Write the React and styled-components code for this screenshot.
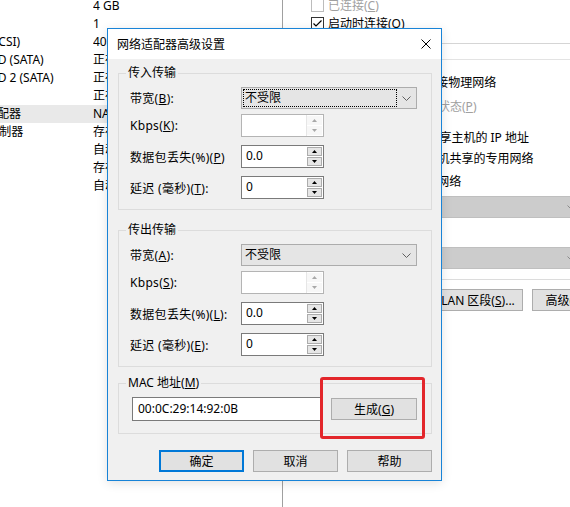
import React from 'react';
import styled, { createGlobalStyle } from 'styled-components';

const GlobalStyle = createGlobalStyle`
  html, body {
    margin: 0;
    padding: 0;
    background: #fff;
  }
  body {
    width: 570px;
    height: 507px;
    overflow: hidden;
    font-family: "Noto Sans", "Noto Sans CJK SC", sans-serif;
    font-size: 12px;
    color: #000;
  }
`;

const Screen = styled.div`
  position: relative;
  display: flex;
  width: 570px;
  height: 507px;
  overflow: hidden;
  background: #fff;
`;

/* ---------- background: VMware device list ---------- */

const DevicePane = styled.div`
  flex: none;
  width: 282px;
  border-right: 1px solid #a0a0a0;
  overflow: hidden;
`;

const DeviceList = styled.div`
  margin: -3px 0 0 -39px;
`;

const DeviceRow = styled.div`
  display: grid;
  grid-template-columns: 132px 1fr;
  height: 18px;
  line-height: 18px;
  white-space: nowrap;
  background: ${({ $selected }) => ($selected ? '#e9e9e9' : 'transparent')};
`;

const Cell = styled.span`
  overflow: hidden;
`;

/* ---------- background: settings on the right ---------- */

const SettingsPane = styled.div`
  flex: none;
  width: 310px;
  margin-top: -4px;
  display: flex;
  flex-direction: column;
`;

const StatusBlock = styled.div`
  padding: 0 0 11px 28px;
  border-bottom: 1px solid #d5d5d5;
`;

const NetworkBlock = styled.div`
  margin-top: 15px;
  padding: 13px 0 10px 30px;
  border-top: 1px solid #e3e3e3;
  border-bottom: 1px solid #dcdcdc;
  display: flex;
  flex-direction: column;
`;

const OptionRow = styled.div`
  display: flex;
  align-items: center;
  gap: ${({ $gap }) => $gap ?? 4}px;
  height: 18px;
  margin-top: ${({ $top }) => $top || 0}px;
  padding-left: ${({ $indent }) => $indent || 0}px;
  white-space: nowrap;
  color: ${({ $disabled }) => ($disabled ? '#a0a0a0' : '#000')};
`;

const OptionText = styled.span`
  white-space: nowrap;
`;

const CheckBox = styled.span`
  flex: none;
  box-sizing: border-box;
  width: 13px;
  height: 13px;
  border: 1px solid ${({ $disabled }) => ($disabled ? '#bcbcbc' : '#333')};
  background: #fff;
  display: flex;
  align-items: center;
  justify-content: center;
`;

const Radio = styled.span`
  flex: none;
  box-sizing: border-box;
  width: 12px;
  height: 12px;
  border-radius: 50%;
  border: 1px solid #333;
  background: #fff;
  display: flex;
  align-items: center;
  justify-content: center;
  &::after {
    content: '';
    width: 6px;
    height: 6px;
    border-radius: 50%;
    background: ${({ $on }) => ($on ? '#333' : 'transparent')};
  }
`;

const DisabledCombo = styled.div`
  box-sizing: border-box;
  width: 251px;
  height: 22px;
  margin: ${({ $top }) => $top}px 0 0 18px;
  background: #cccccc;
  border: 1px solid #bfbfbf;
  display: flex;
  justify-content: flex-end;
  align-items: center;
`;

const PaneButtons = styled.div`
  display: flex;
  gap: 9px;
  margin-top: 9px;
  padding-left: 150px;
`;

/* ---------- dialog ---------- */

const Dialog = styled.div`
  position: absolute;
  left: 107px;
  top: 28px;
  width: 335px;
  height: 453px;
  box-sizing: border-box;
  border: 1px solid #1883d7;
  background: #f0f0f0;
  box-shadow: 0 2px 10px rgba(0, 0, 0, 0.12);
  display: flex;
  flex-direction: column;
`;

const TitleBar = styled.div`
  flex: none;
  height: 30px;
  background: #fff;
  display: flex;
  align-items: center;
  justify-content: space-between;
  padding: 0 10px 0 9px;
`;

const DialogBody = styled.div`
  flex: 1;
  display: flex;
  flex-direction: column;
  padding: 6px 9px 8px 10px;
`;

const Group = styled.fieldset`
  margin: ${({ $top }) => $top || 0}px 0 0;
  padding: 6px 10px ${({ $bottom }) => $bottom ?? 10}px 11px;
  border: 1px solid #dcdcdc;
  min-width: 0;
  display: flex;
  flex-direction: column;
`;

const GroupTitle = styled.legend`
  margin-left: -4px;
  padding: 0 2px;
  line-height: 16px;
  font-size: 12px;
`;

const FieldRow = styled.div`
  display: grid;
  grid-template-columns: 111px auto;
  align-items: center;
  margin-top: ${({ $top }) => $top || 0}px;
  white-space: nowrap;
`;

const FieldLabel = styled.span`
  letter-spacing: 0.3px;
`;

const Combo = styled.div`
  box-sizing: border-box;
  width: 176px;
  height: 22px;
  background: #e5e5e5;
  border: 1px solid #acacac;
  display: flex;
  align-items: center;
`;

const ComboValue = styled.div`
  flex: 1;
  box-sizing: border-box;
  height: 18px;
  margin-left: 1px;
  padding-left: 1px;
  line-height: 16px;
  border: 1px dotted ${({ $focus }) => ($focus ? '#000' : 'transparent')};
`;

const ChevronBox = styled.span`
  flex: none;
  width: 19px;
  display: flex;
  justify-content: center;
`;

const SpinBox = styled.div`
  box-sizing: border-box;
  width: 83px;
  height: 23px;
  background: #fff;
  border: 1px solid ${({ $disabled }) => ($disabled ? '#b4b4b4' : '#7a7a7a')};
  display: flex;
`;

const SpinText = styled.span`
  flex: 1;
  padding-left: 4px;
  line-height: 19px;
`;

const SpinColumn = styled.div`
  flex: none;
  width: 15px;
  padding: 1px 1px 1px 0;
  display: flex;
  flex-direction: column;
  gap: 1px;
  border-left: ${({ $disabled }) => ($disabled ? '1px solid #e6e6e6' : 'none')};
`;

const SpinButton = styled.span`
  flex: 1;
  box-sizing: border-box;
  display: flex;
  align-items: center;
  justify-content: center;
  background: ${({ $disabled }) => ($disabled ? '#f7f7f7' : '#e6e6e6')};
  border: 1px solid ${({ $disabled }) => ($disabled ? 'transparent' : '#acacac')};
`;

const MacRow = styled.div`
  display: flex;
  align-items: center;
  gap: 8px;
  padding-left: 2px;
`;

const MacInput = styled.div`
  box-sizing: border-box;
  width: 191px;
  height: 24px;
  padding-left: 5px;
  line-height: 22px;
  background: #fff;
  border: 1px solid #7a7a7a;
`;

const PushButton = styled.button`
  flex: none;
  box-sizing: border-box;
  width: ${({ $width }) => $width || 85}px;
  height: 22px;
  padding: 0;
  font: inherit;
  color: #000;
  white-space: nowrap;
  background: #e1e1e1;
  border: ${({ $default }) => ($default ? '2px solid #0078d7' : '1px solid #adadad')};
`;

const DialogButtons = styled.div`
  display: flex;
  justify-content: flex-end;
  gap: 9px;
  margin-top: 16px;
`;

const Highlight = styled.div`
  position: absolute;
  left: 212px;
  top: 348px;
  width: 105px;
  height: 62px;
  box-sizing: border-box;
  border: 3px solid #e3262b;
  border-radius: 3px;
  pointer-events: none;
`;

const devices = [
  ['内存', '4 GB'],
  ['处理器', '1'],
  ['硬盘 (SCSI)', '40 GB'],
  ['CD/DVD (SATA)', '正在使用文件'],
  ['CD/DVD 2 (SATA)', '正在使用文件'],
  ['软盘', '正在使用文件'],
  ['网络适配器', 'NAT'],
  ['USB 控制器', '存在'],
  ['声卡', '自动检测'],
  ['打印机', '存在'],
  ['显示器', '自动检测'],
];

const Chevron = ({ color = '#606060' }) => (
  <svg width="9" height="5" viewBox="0 0 9 5">
    <polyline points="0.5,0.5 4.5,4.5 8.5,0.5" fill="none" stroke={color} strokeWidth="1" />
  </svg>
);

const Arrow = ({ up, color }) => (
  <svg width="5" height="3" viewBox="0 0 5 3">
    <polygon points={up ? '0,3 5,3 2.5,0' : '0,0 5,0 2.5,3'} fill={color} />
  </svg>
);

const Tick = () => (
  <svg width="11" height="11" viewBox="0 0 11 11">
    <polyline points="1.5,5.5 4,8 9.5,2.5" fill="none" stroke="#000" strokeWidth="1.2" />
  </svg>
);

const Spinner = ({ value, disabled }) => (
  <SpinBox $disabled={disabled}>
    <SpinText>{value}</SpinText>
    <SpinColumn $disabled={disabled}>
      <SpinButton $disabled={disabled}>
        <Arrow up color={disabled ? '#a8a8a8' : '#000'} />
      </SpinButton>
      <SpinButton $disabled={disabled}>
        <Arrow color={disabled ? '#a8a8a8' : '#000'} />
      </SpinButton>
    </SpinColumn>
  </SpinBox>
);

const TransferGroup = ({ title, top, keys, focus }) => (
  <Group $top={top}>
    <GroupTitle>{title}</GroupTitle>
    <FieldRow>
      <FieldLabel>带宽(<u>{keys[0]}</u>):</FieldLabel>
      <Combo>
        <ComboValue $focus={focus}>不受限</ComboValue>
        <ChevronBox><Chevron /></ChevronBox>
      </Combo>
    </FieldRow>
    <FieldRow $top={5}>
      <FieldLabel>Kbps(<u>{keys[1]}</u>):</FieldLabel>
      <Spinner value="" disabled />
    </FieldRow>
    <FieldRow $top={8}>
      <FieldLabel>数据包丢失(%)(<u>{keys[2]}</u>){focus ? '' : ':'}</FieldLabel>
      <Spinner value="0.0" />
    </FieldRow>
    <FieldRow $top={8}>
      <FieldLabel>延迟 (毫秒)(<u>{keys[3]}</u>):</FieldLabel>
      <Spinner value="0" />
    </FieldRow>
  </Group>
);

export default function App() {
  return (
    <>
      <GlobalStyle />
      <Screen>
        <DevicePane>
          <DeviceList>
            {devices.map(([name, summary], i) => (
              <DeviceRow key={name} $selected={i === 6}>
                <Cell>{name}</Cell>
                <Cell>{summary}</Cell>
              </DeviceRow>
            ))}
          </DeviceList>
        </DevicePane>

        <SettingsPane>
          <StatusBlock>
            <OptionRow $disabled>
              <CheckBox $disabled />
              <OptionText>已连接(<u>C</u>)</OptionText>
            </OptionRow>
            <OptionRow>
              <CheckBox><Tick /></CheckBox>
              <OptionText>启动时连接(<u>O</u>)</OptionText>
            </OptionRow>
          </StatusBlock>

          <NetworkBlock>
            <OptionRow $gap={6}>
              <Radio />
              <OptionText>桥接模式(<u>B</u>): 直接连接物理网络</OptionText>
            </OptionRow>
            <OptionRow $top={6} $indent={12} $disabled>
              <CheckBox $disabled />
              <OptionText>复制物理网络连接状态(<u>P</u>)</OptionText>
            </OptionRow>
            <OptionRow $top={13} $gap={6}>
              <Radio $on />
              <OptionText>NAT 模式(<u>N</u>): 用于共享主机的 IP 地址</OptionText>
            </OptionRow>
            <OptionRow $top={3} $gap={6}>
              <Radio />
              <OptionText>仅主机模式(<u>H</u>): 与主机共享的专用网络</OptionText>
            </OptionRow>
            <OptionRow $top={5} $gap={6}>
              <Radio />
              <OptionText>自定义(<u>U</u>): 特定虚拟网络</OptionText>
            </OptionRow>
            <DisabledCombo $top={6}>
              <ChevronBox><Chevron color="#8a8a8a" /></ChevronBox>
            </DisabledCombo>
            <OptionRow $top={4} $indent={18} $disabled>
              <OptionText>LAN 区段(<u>L</u>):</OptionText>
            </OptionRow>
            <DisabledCombo $top={7}>
              <ChevronBox><Chevron color="#8a8a8a" /></ChevronBox>
            </DisabledCombo>
          </NetworkBlock>

          <PaneButtons>
            <PushButton $width={90}>LAN 区段(<u>S</u>)...</PushButton>
            <PushButton $width={75}>高级(<u>V</u>)...</PushButton>
          </PaneButtons>
        </SettingsPane>

        <Dialog>
          <TitleBar>
            <span>网络适配器高级设置</span>
            <svg width="10" height="10" viewBox="0 0 10 10">
              <path d="M0.5 0.5 L9.5 9.5 M9.5 0.5 L0.5 9.5" stroke="#000" strokeWidth="1" />
            </svg>
          </TitleBar>
          <DialogBody>
            <TransferGroup title="传入传输" keys={['B', 'K', 'P', 'T']} focus />
            <TransferGroup title="传出传输" top={12} keys={['A', 'S', 'L', 'E']} />
            <Group $top={8} $bottom={12}>
              <GroupTitle>MAC 地址(<u>M</u>)</GroupTitle>
              <MacRow>
                <MacInput>00:0C:29:14:92:0B</MacInput>
                <PushButton $width={86}>生成(<u>G</u>)</PushButton>
              </MacRow>
            </Group>
            <DialogButtons>
              <PushButton $default>确定</PushButton>
              <PushButton>取消</PushButton>
              <PushButton>帮助</PushButton>
            </DialogButtons>
          </DialogBody>
          <Highlight />
        </Dialog>
      </Screen>
    </>
  );
}
